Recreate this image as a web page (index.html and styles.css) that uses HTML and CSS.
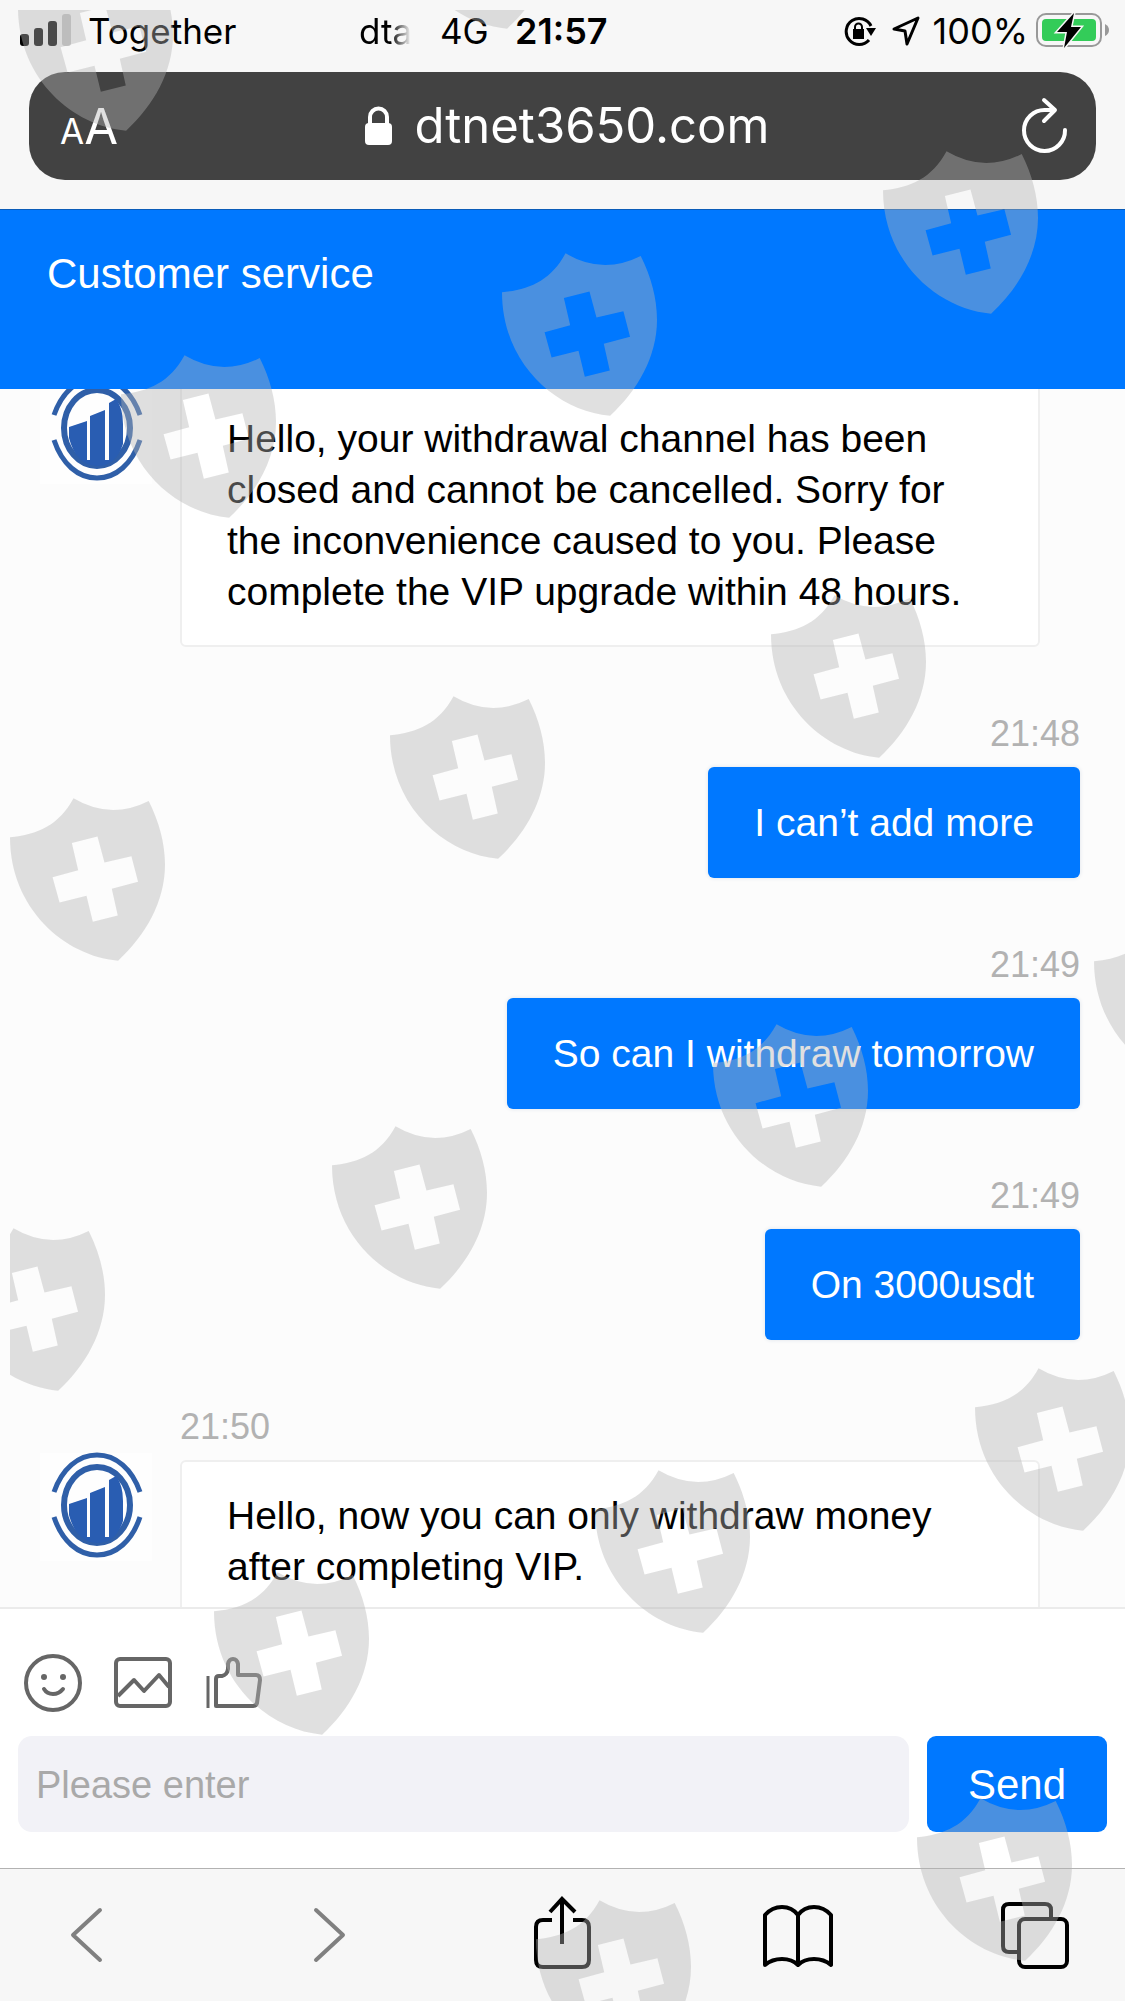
FILE: index.html
```html
<!DOCTYPE html>
<html lang="en">
<head>
<meta charset="utf-8">
<meta name="viewport" content="width=device-width, initial-scale=1">
<title>Customer service</title>
<link rel="stylesheet" href="styles.css">
</head>
<body>
<svg class="defs" aria-hidden="true">
  <defs>
    <symbol id="shield" viewBox="67 70 466 488">
      <path fill-rule="evenodd" d="M67 187C150 180 215 150 258 70Q369 136 484 78C515 140 533 205 533 270C533 380 475 482 392 558C230 544 67 400 67 187ZM253 204L330 185L351 263L432 244L452 321L373 342L391 422L316 441L297 363L216 383L195 307L272 286Z"/>
    </symbol>
    <symbol id="logo" viewBox="0 0 112 120">
      <rect y="4" width="112" height="108" fill="#fefefe"/>
      <g fill="none" stroke="#2f5fa8">
        <path stroke-width="5" d="M14 43C22 20 38 6 57 6S92 20 100 43M14 68C22 92 38 106 57 106S92 92 100 68"/>
        <ellipse cx="57" cy="56" rx="33" ry="38" stroke-width="6"/>
      </g>
      <path fill="#295db2" d="M29 55L47 49V88H50V44L65 38V88H69V31L76 27Q83 36 83 52V72Q76 94 57 94Q36 93 29 66Z"/>
    </symbol>
  </defs>
</svg>

<header class="browser-top">
  <div class="status">
    <div class="status-left">
      <svg class="signal" width="52" height="34" viewBox="0 0 52 34">
        <rect x="0" y="21" width="9" height="12" rx="3"/>
        <rect x="14" y="15" width="9" height="18" rx="3"/>
        <rect x="28" y="8" width="9" height="25" rx="3"/>
        <rect x="42" y="1" width="9" height="32" rx="3" fill="#c3c3c3"/>
      </svg>
      <span class="carrier">Together</span>
      <span class="carrier-alt">dta</span>
      <span class="network">4G</span>
      <span class="clock">21:57</span>
    </div>
    <div class="status-right">
      <svg width="32" height="32" viewBox="0 0 32 32">
        <path fill="none" stroke="#000" stroke-width="3" d="M25 25A13 13 0 1 1 27 11"/>
        <path d="M22 13H32L27 21ZM9 14H20V24H9Z"/>
        <path fill="none" stroke="#000" stroke-width="2" d="M11 15V12a3.500 3.500 0 0 1 7 0V15"/>
      </svg>
      <svg width="28" height="32" viewBox="0 0 28 32">
        <path fill="none" stroke="#000" stroke-width="3" stroke-linejoin="round" d="M2 14L26 3L15 29L13 16Z"/>
      </svg>
      <span class="percent">100%</span>
      <svg width="74" height="38" viewBox="0 0 74 38">
        <rect x="1" y="3" width="64" height="32" rx="9" fill="none" stroke="#999" stroke-width="2"/>
        <path d="M69 13Q73 15 73 19T69 25Z" fill="#999"/>
        <rect x="6" y="8" width="54" height="22" rx="4" fill="#33cc59"/>
        <path d="M38 2L21 21H31L28 37L45 16H35Z" stroke="#f7f7f7" stroke-width="3" paint-order="stroke"/>
      </svg>
    </div>
  </div>
  <div class="address">
    <button class="text-size" aria-label="Text size"><span class="small-a">A</span><span>A</span></button>
    <a class="url" href="#">
      <svg width="28" height="40" viewBox="0 0 28 40">
        <rect x="0" y="17" width="27" height="22" rx="4" fill="#fff"/>
        <path d="M5 18V11a8.500 8.500 0 0 1 17 0V18" fill="none" stroke="#fff" stroke-width="4"/>
      </svg>
      <span>dtnet3650.com</span>
    </a>
    <button class="reload" aria-label="Reload">
      <svg width="48" height="58" viewBox="0 0 48 58" fill="none" stroke="#fff" stroke-width="4" stroke-linecap="round" stroke-linejoin="round">
        <path d="M45 33A20.500 20.500 0 1 1 25 13H34M24 3L35 13L24 24"/>
      </svg>
    </button>
  </div>
</header>

<main class="page">
  <h1 class="title">Customer service</h1>
  <section class="chat">
    <article class="message agent">
      <svg class="avatar" role="img" aria-label="Agent"><use href="#logo"/></svg>
      <p class="bubble">Hello, your withdrawal channel has been closed and cannot be cancelled. Sorry for the inconvenience caused to you. Please complete the VIP upgrade within 48 hours.</p>
    </article>
    <article class="message user">
      <time>21:48</time>
      <p class="bubble">I can’t add more</p>
    </article>
    <article class="message user">
      <time>21:49</time>
      <p class="bubble">So can I withdraw tomorrow</p>
    </article>
    <article class="message user">
      <time>21:49</time>
      <p class="bubble">On 3000usdt</p>
    </article>
    <article class="message agent">
      <time>21:50</time>
      <svg class="avatar" role="img" aria-label="Agent"><use href="#logo"/></svg>
      <p class="bubble">Hello, now you can only withdraw money after completing VIP.</p>
    </article>
  </section>
  <form class="composer">
    <div class="tools">
      <button type="button" aria-label="Emoji">
        <svg width="58" height="60" viewBox="0 0 58 60" fill="none" stroke="#666" stroke-width="4" stroke-linecap="round">
          <ellipse cx="29" cy="31" rx="27" ry="27"/>
          <path d="M20 37Q23 42 29 42T39 37"/>
          <circle cx="20" cy="25" r="3" fill="#666" stroke="none"/>
          <circle cx="39" cy="25" r="3" fill="#666" stroke="none"/>
        </svg>
      </button>
      <button type="button" aria-label="Picture">
        <svg width="58" height="60" viewBox="0 0 58 60" fill="none" stroke="#666" stroke-width="4" stroke-linejoin="round">
          <rect x="2" y="7" width="54" height="47" rx="4"/>
          <path d="M4 44L20 28L30 39L45 23L55 35"/>
        </svg>
      </button>
      <button type="button" aria-label="Like">
        <svg width="58" height="60" viewBox="0 0 58 60" fill="none" stroke="#666" stroke-width="4" stroke-linejoin="round">
          <path stroke-width="3" d="M4 24V56"/>
          <path d="M12 54V27Q12 24 15 24H18Q23 23 24 17V12Q25 7 29 7T34 12V23H52Q56 23 56 28L53 51Q52 54 49 54Z"/>
        </svg>
      </button>
    </div>
    <div class="entry">
      <input type="text" placeholder="Please enter" aria-label="Message">
      <button class="send" type="button">Send</button>
    </div>
  </form>
</main>

<nav class="toolbar">
  <button aria-label="Back">
    <svg width="72" height="80" viewBox="0 0 72 80" fill="none" stroke="#808080" stroke-width="4" stroke-linecap="round" stroke-linejoin="round"><path d="M50 15L23 40L50 65"/></svg>
  </button>
  <button aria-label="Forward">
    <svg width="72" height="80" viewBox="0 0 72 80" fill="none" stroke="#808080" stroke-width="4" stroke-linecap="round" stroke-linejoin="round"><path d="M29 15L56 40L29 65"/></svg>
  </button>
  <button aria-label="Share">
    <svg width="72" height="80" viewBox="0 0 72 80" fill="none" stroke="#000" stroke-width="4"><path d="M27 25H18Q11 25 11 32V65Q11 72 18 72H57Q64 72 64 65V32Q64 25 57 25H48M37 49V4M25 17L37 4L50 17"/></svg>
  </button>
  <button aria-label="Bookmarks">
    <svg width="72" height="80" viewBox="0 0 72 80" fill="none" stroke="#000" stroke-width="4" stroke-linejoin="round"><path d="M36 20Q30 12 20 12T3 20V70Q10 64 20 64T36 70Q42 64 52 64T69 70V20Q62 12 52 12T36 20V70"/></svg>
  </button>
  <button aria-label="Tabs">
    <svg width="72" height="80" viewBox="0 0 72 80" fill="none" stroke="#000" stroke-width="4"><path d="M52 24V15Q52 9 46 9H10Q4 9 4 15V51Q4 57 10 57H19"/><rect x="20" y="24" width="48" height="48" rx="6"/></svg>
  </button>
</nav>

<svg class="watermark" aria-hidden="true">
  <use href="#shield" width="155" height="163" x="8" y="-42"/>
  <use href="#shield" width="155" height="163" x="389" y="-144"/>
  <use href="#shield" width="155" height="163" x="873" y="141"/>
  <use href="#shield" width="155" height="163" x="492" y="243"/>
  <use href="#shield" width="155" height="163" x="111" y="345"/>
  <use href="#shield" width="155" height="163" x="761" y="585"/>
  <use href="#shield" width="155" height="163" x="380" y="686"/>
  <use href="#shield" width="155" height="163" x="0" y="788"/>
  <use href="#shield" width="155" height="163" x="1084" y="912"/>
  <use href="#shield" width="155" height="163" x="703" y="1014"/>
  <use href="#shield" width="155" height="163" x="322" y="1116"/>
  <use href="#shield" width="155" height="163" x="-60" y="1218"/>
  <use href="#shield" width="155" height="163" x="965" y="1358"/>
  <use href="#shield" width="155" height="163" x="585" y="1460"/>
  <use href="#shield" width="155" height="163" x="204" y="1562"/>
  <use href="#shield" width="155" height="163" x="907" y="1788"/>
  <use href="#shield" width="155" height="163" x="526" y="1890"/>
</svg>
</body>
</html>
```
FILE: styles.css
```css
* {
  box-sizing: border-box;
}

body {
  position: relative;
  display: flex;
  flex-direction: column;
  height: 100vh;
  margin: 0;
  overflow: hidden;
  background: #f7f7f7;
  color: #000;
  font-family: "Liberation Sans", Arial, sans-serif;
}

button {
  display: block;
  padding: 0;
  border: 0;
  background: none;
  color: inherit;
  font: inherit;
}

svg {
  display: block;
  flex: none;
}

.defs {
  position: absolute;
  width: 0;
  height: 0;
}

/* Browser chrome, top */
.browser-top {
  flex: none;
  padding-bottom: 29px;
  border-bottom: 1px solid #0a5cb8;
  font-family: Inter, "Liberation Sans", sans-serif;
}

.status {
  display: flex;
  justify-content: space-between;
  height: 72px;
  padding: 12px 15px 0 20px;
  font-size: 35px;
  line-height: 38px;
}

.status-left,
.status-right {
  display: flex;
  align-items: flex-start;
}

.signal {
  margin-top: 1px;
}

.carrier {
  width: 271px;
  margin-left: 16px;
}

.carrier-alt {
  width: 52px;
  margin-right: 29px;
  overflow: hidden;
  -webkit-mask-image: linear-gradient(to right, #000 60%, transparent);
  mask-image: linear-gradient(to right, #000 60%, transparent);
}

.network {
  width: 75px;
}

.clock {
  font-size: 36px;
  font-weight: 600;
}

.status-right svg {
  margin-top: 3px;
}

.status-right svg + svg {
  margin-left: 16px;
}

.percent {
  margin-left: 13px;
  font-size: 36px;
}

.status-right .percent + svg {
  margin: -1px 0 0 8px;
}

.address {
  display: grid;
  grid-template-columns: 1fr auto 1fr;
  align-items: center;
  height: 108px;
  margin: 0 29px;
  padding: 0 28px 0 31px;
  border-radius: 36px;
  background: #424242;
  color: #fff;
  font-size: 49px;
  line-height: 60px;
}

.text-size {
  justify-self: start;
  padding-top: 6px;
}

.small-a {
  font-size: 35px;
}

.url {
  display: flex;
  align-items: center;
  gap: 22px;
  padding-left: 6px;
  color: inherit;
  text-decoration: none;
}

.reload {
  justify-self: end;
}

/* Chat page */
.page {
  display: flex;
  flex: 1;
  flex-direction: column;
  min-height: 0;
  background: #fcfcfc;
}

.title {
  flex: none;
  height: 179px;
  margin: 0;
  padding: 39px 47px;
  background: #0078ff;
  color: #fff;
  font-size: 42px;
  font-weight: 400;
  line-height: 50px;
}

.chat {
  display: flex;
  flex: 1;
  flex-direction: column;
  gap: 66px;
  min-height: 0;
  padding: 0 45px 0 40px;
  overflow: hidden;
}

.message {
  display: grid;
  flex: none;
  row-gap: 12px;
}

.message time {
  color: #b2b2b2;
  font-size: 36px;
  line-height: 42px;
}

.bubble {
  margin: 0;
  padding: 30px 46px;
  border-radius: 6px;
  font-size: 39px;
  line-height: 51px;
}

.user {
  justify-items: end;
}

.user .bubble {
  background: #0078ff;
  box-shadow: 0 0 4px #dde3ea;
  color: #fff;
}

.agent {
  grid-template-columns: 112px minmax(0, 1fr);
  column-gap: 28px;
  padding-right: 40px;
}

.agent:first-child {
  margin-top: -6px;
}

.agent time {
  grid-column: 2;
}

.agent .bubble {
  padding: 28px 45px;
  border: 2px solid #efefef;
  background: #fff;
}

.avatar {
  width: 112px;
  height: 120px;
  margin-top: -11px;
}

.composer {
  flex: none;
  padding: 43px 18px 36px;
  border-top: 2px solid #ebebeb;
  background: #fff;
}

.tools {
  display: flex;
  gap: 32px;
  padding: 0 6px;
}

.entry {
  display: flex;
  gap: 18px;
  margin-top: 24px;
}

.entry input {
  flex: 1;
  min-width: 0;
  height: 96px;
  padding: 2px 18px 0;
  border: 0;
  border-radius: 14px;
  background: #f2f2f7;
  color: #000;
  font: inherit;
  font-size: 38px;
}

.entry input::placeholder {
  color: #a9a9a9;
  opacity: 1;
}

.send {
  width: 180px;
  height: 96px;
  padding-top: 2px;
  border-radius: 9px;
  background: #0078ff;
  color: #fff;
  font-size: 42px;
}

/* Browser chrome, bottom */
.toolbar {
  display: flex;
  flex: none;
  justify-content: space-between;
  height: 133px;
  padding: 26px 54px 0 50px;
  border-top: 1px solid #b2b2b2;
}

.toolbar button {
  height: 80px;
}

/* Repeated shield mark laid over the whole screen */
.watermark {
  position: absolute;
  top: 10px;
  left: 10px;
  width: calc(100% - 10px);
  height: calc(100% - 10px);
  overflow: hidden;
  fill: rgba(180, 180, 180, 0.41);
  pointer-events: none;
}
```
